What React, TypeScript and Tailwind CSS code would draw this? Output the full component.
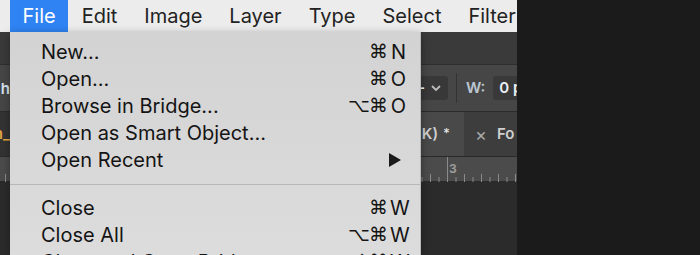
import React from "react";

const menus = ["File", "Edit", "Image", "Layer", "Type", "Select", "Filter"];

type Item = { label: string; keys?: string; sub?: boolean } | "sep";

const items: Item[] = [
  { label: "New...", keys: "⌘N" },
  { label: "Open...", keys: "⌘O" },
  { label: "Browse in Bridge...", keys: "⌥⌘O" },
  { label: "Open as Smart Object..." },
  { label: "Open Recent", sub: true },
  "sep",
  { label: "Close", keys: "⌘W" },
  { label: "Close All", keys: "⌥⌘W" },
  { label: "Close and Go to Bridge...", keys: "⇧⌘W" },
];

function Shortcut({ keys }: { keys: string }) {
  const chars = Array.from(keys);
  const letter = chars.pop();
  return (
    <span className="flex items-center gap-[3px]">
      <span className="text-[19px] tracking-[-1px] font-['DejaVu_Sans',sans-serif]">{chars.join("")}</span>
      <span className="w-[17px] text-center">{letter}</span>
    </span>
  );
}

function Ruler() {
  const ticks = Array.from({ length: 70 }, (_, i) => i);
  return (
    <div className="relative h-[25px] bg-[#4b4b4b] border-b border-[#2a2a2a]">
      <svg className="absolute inset-0" width="517" height="25">
        {ticks.map((i) => (
          <line
            key={i}
            x1={447 + (i - 60) * 8.5 + 0.5}
            x2={447 + (i - 60) * 8.5 + 0.5}
            y1={i % 2 === 0 ? 17 : 20}
            y2={25}
            stroke="#8a8a8a"
            strokeWidth="1"
          />
        ))}
        <line x1="447.5" x2="447.5" y1="0" y2="25" stroke="#8a8a8a" />
      </svg>
      <div className="relative flex h-full items-start pl-[449px] pt-[3px] text-[12px] font-bold text-[#9a9a9a]">3</div>
    </div>
  );
}

export default function App() {
  return (
    <div
      className="relative flex w-[700px] h-[255px] overflow-hidden bg-[#1b1b1b]"
      style={{ fontFamily: 'Inter, "Liberation Sans", "DejaVu Sans", sans-serif' }}
    >
      <div className="relative flex w-[517px] flex-col">
        {/* menu bar */}
        <div className="flex h-[32px] items-stretch bg-[#ececec] pl-[10px] text-[20px] text-[#222]">
          {menus.map((m, i) => (
            <div
              key={m}
              className={
                i === 0
                  ? "flex items-center bg-[#2f83f3] px-[12.5px] text-white"
                  : "flex items-center px-[13.5px]"
              }
            >
              {m}
            </div>
          ))}
        </div>

        {/* photoshop workspace behind the menu */}
        <div className="flex flex-1 flex-col bg-[#2c2c2c]">
          <div className="h-[33px] bg-[#3a3a3a] border-b border-[#2e2e2e]" />
          <div className="flex h-[47px] items-center bg-[#464646] border-b border-[#2b2b2b] text-[15px] font-semibold text-[#c8c8c8]">
            <div className="flex w-[10px] justify-end pt-[2px] text-[#d8e4f2]">h</div>
            <div className="ml-[360px] flex h-[24px] w-[78px] items-center justify-end gap-[6px] rounded-[3px] bg-[#383838] pr-[6px]">
              <span className="text-white">–</span>
              <svg width="12" height="8" viewBox="0 0 12 8">
                <path d="M2 2l4 4 4-4" fill="none" stroke="#bdbdbd" strokeWidth="1.8" />
              </svg>
            </div>
            <div className="ml-[8px] h-[30px] w-px bg-[#333]" />
            <span className="ml-[9px] text-[#bcc6d2]">W:</span>
            <div className="ml-[8px] flex h-[24px] flex-1 items-center overflow-hidden whitespace-nowrap rounded-l-[3px] bg-[#393939] pl-[6px] text-[#e8eef6]">0 p</div>
          </div>
          <div className="flex h-[45px] items-stretch bg-[#333] border-b border-[#2a2a2a] text-[15px] font-semibold text-[#cfcfcf]">
            <div className="flex w-[10px] items-center justify-end text-[#e3a542]">n_</div>
            <div className="flex w-[454px] items-center justify-end gap-[5px] bg-[#494949] pr-[14px]">
              <span>K)</span>
              <span className="text-[13px] text-[#dcdcdc]">*</span>
            </div>
            <div className="flex flex-1 items-center gap-[10px] overflow-hidden whitespace-nowrap bg-[#3d3d3d] pl-[11px]">
              <span className="text-[18px] font-normal text-[#a9a9a9]">×</span>
              <span>Fo</span>
            </div>
          </div>
          <Ruler />
          <div className="flex-1 bg-[#2b2b2b]" />
        </div>

        {/* File dropdown */}
        <div className="absolute left-[10px] top-[32px] bottom-0 w-[411px] bg-gradient-to-b from-[#d4d3d3] to-[#dddcdc] border-r border-[#b9b9b9] pt-[6px] pl-[31px] pr-[13px] text-[20px] text-[#141414] shadow-[0_2px_8px_rgba(0,0,0,0.35)]">
          {items.map((it, i) =>
            it === "sep" ? (
              <div key={i} className="-ml-[31px] -mr-[13px] pt-[11px] pb-[9px]">
                <div className="h-px bg-[#b8b8b8]" />
              </div>
            ) : (
              <div key={i} className="flex h-[27px] items-center justify-between">
                <span>{it.label}</span>
                {it.keys && <Shortcut keys={it.keys} />}
                {it.sub && (
                  <svg width="12" height="14" viewBox="0 0 12 14" className="mr-[6px]">
                    <path d="M0 0L12 7L0 14Z" fill="#1b1b1b" />
                  </svg>
                )}
              </div>
            )
          )}
        </div>
      </div>
    </div>
  );
}
